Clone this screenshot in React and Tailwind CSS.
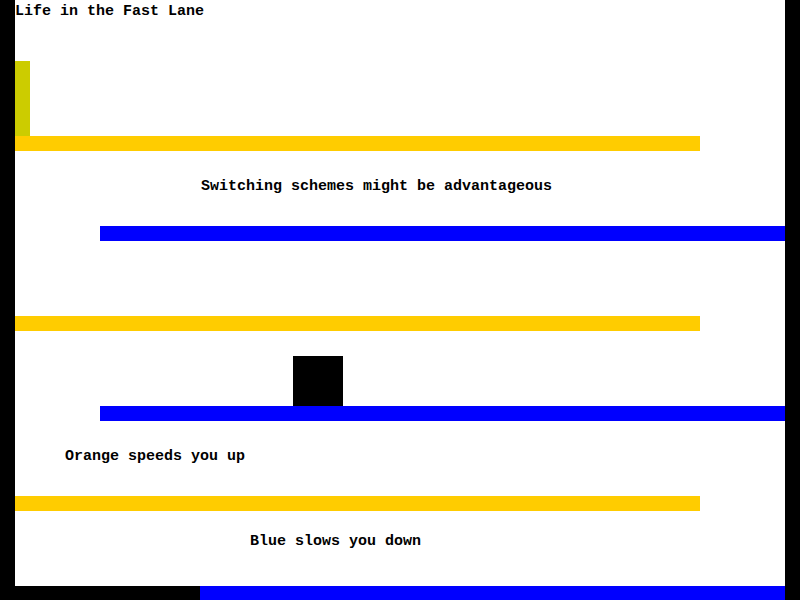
const mono = { fontFamily: '"Liberation Mono", "Courier New", monospace' }

function Label({ className, children }) {
  return (
    <div
      className={`text-[15px] leading-none font-bold text-black whitespace-nowrap ${className}`}
      style={mono}
    >
      {children}
    </div>
  )
}

const orange = 'h-[15px] w-[685px] shrink-0 bg-[#ffcc00]'
const blue = 'h-[15px] w-[685px] shrink-0 ml-[85px] bg-[#0000ff]'

export default function App() {
  return (
    <div className="w-[800px] h-[600px] bg-black px-[15px] flex flex-col overflow-hidden">
      {/* playfield */}
      <div className="w-[770px] h-[586px] bg-white flex flex-col">
        <div className="h-[61px] pt-[4px]">
          <Label>Life in the Fast Lane</Label>
        </div>

        <div className="h-[75px]">
          <div className="w-[15px] h-full bg-[#cccc00]" />
        </div>
        <div className={orange} />

        <div className="h-[75px] pt-[28px] pl-[186px]">
          <Label>Switching schemes might be advantageous</Label>
        </div>
        <div className={blue} />

        <div className="h-[75px]" />
        <div className={orange} />

        <div className="h-[75px] flex items-end pl-[278px]">
          <div className="w-[50px] h-[50px] bg-black" />
        </div>
        <div className={blue} />

        <div className="h-[75px] pt-[28px] pl-[50px]">
          <Label>Orange speeds you up</Label>
        </div>
        <div className={orange} />

        <div className="h-[75px] pt-[23px] pl-[235px]">
          <Label>Blue slows you down</Label>
        </div>
      </div>
      <div className="h-[14px] flex pl-[185px]">
        <div className="w-[585px] h-full bg-[#0000ff]" />
      </div>
    </div>
  )
}
